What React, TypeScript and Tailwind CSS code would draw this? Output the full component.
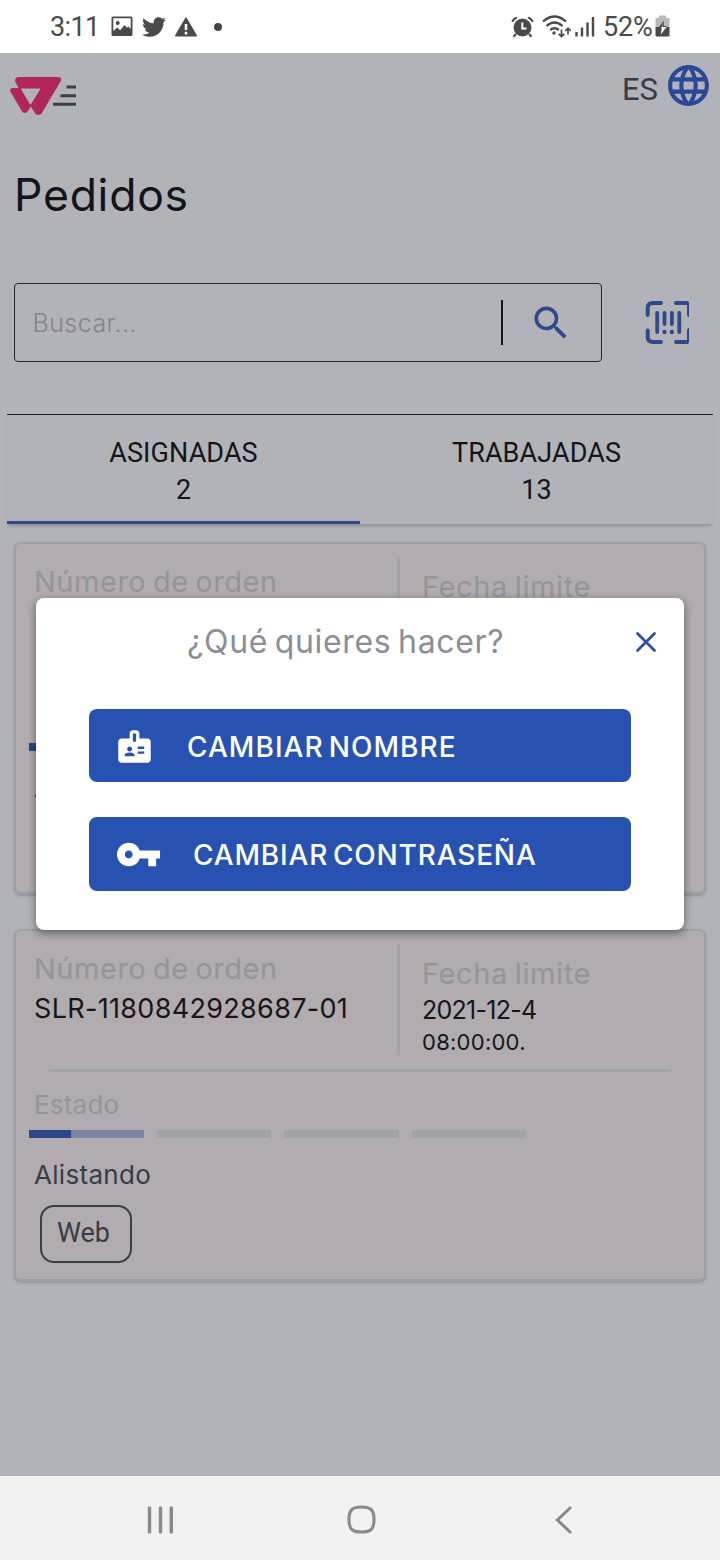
import type { ReactNode } from "react";
import { FaTwitter } from "react-icons/fa";
import { MdBadge, MdLanguage, MdSearch, MdVpnKey } from "react-icons/md";

function StatusBar() {
  return (
    <div className="flex h-[53px] items-center bg-white pl-[50px] text-[#4a4a4a]">
      <span className="w-[61px] pt-px font-[Roboto,sans-serif] text-[27px] leading-8 tracking-[-0.6px]">3:11</span>
      <svg className="h-[21px] w-[22px]" viewBox="0 0 22 21">
        <path
          fill="currentColor"
          fillRule="evenodd"
          d="M2 0.5h18a1.5 1.5 0 0 1 1.5 1.5v16.500a1.500 1.500 0 0 1-1.500 1.500H2a1.500 1.500 0 0 1-1.500-1.500V2A1.500 1.500 0 0 1 2 0.500zM2.300 2.300v12.700l4-3.500 2.800 2.800 4.400-5.300 2.500 2.700 1.300-1.200 2.400 2.200V2.300zM6.700 5a2 2 0 1 1 0 4 2 2 0 0 1 0-4z"
        />
      </svg>
      <FaTwitter className="ml-[9px] size-[24px]" />
      <svg className="ml-[8px] size-[24px]" viewBox="0 0 24 24">
        <path d="M12 3L22.300 20.700H1.700z" fill="currentColor" stroke="currentColor" strokeLinejoin="round" strokeWidth="1.400" />
        <path d="M12 9v6M12 16.800v2.600" stroke="#fff" strokeWidth="2.600" />
      </svg>
      <span className="ml-[16px] size-2 rounded-full bg-[#444444]" />
      <svg className="ml-[289px] h-[22px] w-[23px]" viewBox="0 0 23 22">
        <circle cx="11.500" cy="11.500" r="9" fill="currentColor" />
        <path d="M11.300 6.500v6h4.200" fill="none" stroke="#fff" strokeWidth="2" />
        <path
          d="M1.200 5.800Q2.500 2.800 5.800 1.500M21.800 5.800Q20.500 2.800 17.200 1.500M5 18l-2.500 2.700M18 18l2.500 2.700"
          fill="none"
          stroke="currentColor"
          strokeWidth="2.200"
        />
      </svg>
      <svg className="ml-[8px] h-[23px] w-[29px]" viewBox="0 0 29 23">
        <g fill="none" stroke="currentColor" strokeWidth="2.300">
          <path d="M1 6.500Q12.500-3.500 24 6.500M4.500 11q8-7 16 0M8.200 15q4.300-3.600 8.600 0" />
          <path d="M19.500 14.500v7M16.700 18.800l2.800 2.800 2.800-2.800M26 19.500v-6M23.200 16l2.800-2.800L28.800 16" strokeWidth="1.700" />
        </g>
        <circle cx="12" cy="18" r="1.700" fill="currentColor" />
      </svg>
      <svg className="ml-[4px] h-[21px] w-[20px]" viewBox="0 0 20 21">
        <path d="M1.500 16v4.500M7 11.500v9M12.500 6.500v14M18 1v19.500" stroke="currentColor" strokeWidth="2.400" />
      </svg>
      <span className="ml-[8px] w-[52px] pt-px font-[Roboto,sans-serif] text-[27px] leading-8 tracking-[-0.2px]">52%</span>
      <svg className="mb-px h-[22px] w-[15px]" viewBox="0 0 15 22">
        <path d="M4 0.500h7v2.500h3.500V12H0.500V3H4z" fill="#b9b9b9" />
        <path d="M0.500 12h14v8.500q0 1-1 1h-12q-1 0-1-1z" fill="#4a4a4a" />
        <path d="M9.200 5.500L3.500 12.500h3z" fill="#4a4a4a" />
        <path d="M8.800 5.500v5.500h3l-.5 1H7.500z" fill="#4a4a4a" />
        <path d="M6.300 12h5.200l-5.700 7.500.8-5.500z" fill="#fff" />
      </svg>
    </div>
  );
}

function Logo() {
  return (
    <svg className="mt-[23px] h-[40px] w-[68px]" viewBox="9 76 68 40">
      <path
        fill="#b0265c"
        fillRule="evenodd"
        d="M18 77H58.500Q62.300 77.500 60.800 81L41.500 113.500Q38.500 116.500 35.300 113.500L30.700 106.500 27.500 111.800Q25 114 22.400 112L10.300 91.500Q9.300 88.500 12.200 88H18.500L15.200 81.500Q14.500 78 18 77ZM21.800 88.600Q20.800 88.800 21.300 89.800L29.900 104Q30.500 105 31.100 104L39.900 89.800Q40.300 88.700 39.300 88.600Z"
      />
      <path d="M66.500 87H76M60.500 95.700H76M53 104.300H76" stroke="#393e48" strokeWidth="2.900" />
    </svg>
  );
}

function ScanIcon() {
  return (
    <svg className="ml-[43px] h-[45px] w-[45px]" viewBox="0 0 45 45">
      <g fill="none" stroke="#2f4a8c" strokeLinecap="round" strokeWidth="4">
        <path d="M2.700 15V8Q2.700 3 8 3h8M31 3h10.500M2.700 30.500v6.500q0 5 5.300 5h8M31 42h10.500" />
        <path d="M12.200 13v19M19.500 13v11M26.900 13v11M34.300 13v19" strokeWidth="3.800" />
        <path d="M19.500 32v.1M26.900 32v.1" strokeWidth="4.400" />
      </g>
      <path d="M40 1h2.300q1.700.3 1.700 2.500V17h-1Q42 16 42 14.500V5H40zM40 44h2.300q1.700-.3 1.700-2.500V28h-1q-1 1-1 2.500V40H40z" fill="#2f4a8c" />
    </svg>
  );
}

function Tab({ label, count, active }: { label: string; count: number; active?: boolean }) {
  return (
    <div
      className={
        active
          ? "flex w-[353px] flex-col items-center border-b-[3px] border-[#30498a] pt-[20px]"
          : "flex w-[353px] flex-col items-center pt-[20px]"
      }
    >
      <span className="h-[37px] font-[Roboto,sans-serif] text-[27px] leading-[37px] tracking-[0.1px]">{label}</span>
      <span className="h-[37px] font-[Roboto,sans-serif] text-[27px] leading-[37px]">{count}</span>
    </div>
  );
}

type Order = { number?: string; date?: string; time?: string; channel?: string };

function OrderCard({ number, date, time, channel }: Order) {
  return (
    <section className="h-[352px] rounded-[7px] border-2 border-[#9fa0a7] bg-[#b2abb0] shadow-[0_2px_3px_rgba(70,75,90,0.3)]">
      <div className="mt-[13px] flex h-[111px]">
        <div className="flex w-[381px] flex-col pt-[8px] pl-[18px]">
          <span className="text-[29px] leading-[33px] tracking-[0.520px] text-[#94959b] [word-spacing:-2px]">Número de orden</span>
          <span className="mt-[7px] text-[27px] leading-[33px] tracking-[0.320px] text-[#17151a]">{number}</span>
        </div>
        <div className="w-[3px] bg-[#a1a3aa]" />
        <div className="flex flex-col pt-[13px] pl-[22px]">
          <span className="text-[29px] leading-[33px] tracking-[0.620px] text-[#94959b] [word-spacing:-2px]">Fecha limite</span>
          <span className="mt-[8px] text-[25px] leading-[25px] tracking-[-0.730px] text-[#17151a]">{date}</span>
          <span className="mt-[7px] text-[22px] leading-[24px] tracking-[0.260px] text-[#17151a]">{time}</span>
        </div>
      </div>
      <div className="mx-[33px] mt-[14px] h-[3px] bg-[#a1a3aa]" />
      <div className="mt-[17px] ml-[18px] text-[26px] leading-[31px] tracking-[0.200px] text-[#94959b]">Estado</div>
      <div className="mt-[10px] ml-[13px] flex h-[8px] w-[497px] gap-[13px]">
        <div className="flex flex-1 bg-[#7d85a5]">
          <div className="w-[42px] bg-[#2d4788]" />
        </div>
        <div className="flex-1 bg-[#a0a4a8]" />
        <div className="flex-1 bg-[#a0a4a8]" />
        <div className="flex-1 bg-[#a0a4a8]" />
      </div>
      <div className="mt-[21px] ml-[18px] text-[26px] leading-[31px] tracking-[0.300px] text-[#393b47]">Alistando</div>
      {channel && (
        <div className="mt-[15px] ml-[24px] flex h-[58px] w-[92px] items-center justify-center rounded-[14px] border-2 border-[#3c3f4a] pr-[5px] pb-[3px] font-[Roboto,sans-serif] text-[27px] leading-8 text-[#393b47]">
          {channel}
        </div>
      )}
    </section>
  );
}

function DialogButton({ icon, children }: { icon: ReactNode; children: ReactNode }) {
  return (
    <button className="flex h-full w-[542px] items-center rounded-[8px] bg-[#2852b2] pl-[26px] text-[28px] leading-8 font-medium text-white">
      {icon}
      {children}
    </button>
  );
}

function Dialog() {
  return (
    <div className="absolute top-[598px] left-[36px] flex h-[332px] w-[648px] flex-col items-center rounded-[8px] bg-white shadow-[0_3px_10px_rgba(0,0,0,0.45)]">
      <div className="flex h-[87px] w-full items-center pl-[151px]">
        <h2 className="w-[448.500px] text-[32px] leading-9 tracking-[0.670px] text-[#8b8d98] [word-spacing:-3px]">¿Qué quieres hacer?</h2>
        <svg className="h-[20px] w-[20px]" viewBox="0 0 20 20">
          <path d="M1.500 1.500l17 17M18.500 1.500l-17 17" stroke="#2a4fa6" strokeLinecap="round" strokeWidth="2.700" />
        </svg>
      </div>
      <div className="mt-[24px] grid grid-rows-[73px_74px] gap-[35px]">
        <DialogButton icon={<MdBadge className="mt-px mr-[33px] size-[39px]" />}>
          <span className="pt-[3px] tracking-[1.050px] [word-spacing:-3.500px]">CAMBIAR NOMBRE</span>
        </DialogButton>
        <DialogButton icon={<MdVpnKey className="mr-[31px] size-[47px]" />}>
          <span className="pt-[2px] tracking-[0.830px] [word-spacing:-3.500px]">CAMBIAR CONTRASEÑA</span>
        </DialogButton>
      </div>
    </div>
  );
}

function NavigationBar() {
  return (
    <div className="flex h-[84px] items-center bg-[#f1f1f1] pt-[3px] pl-[147px] text-[#8a8a8a]">
      <svg className="h-[28px] w-[27px]" viewBox="0 0 27 28">
        <path d="M2.500 2v24M13.500 2v24M24.300 2v24" stroke="currentColor" strokeLinecap="round" strokeWidth="3.500" />
      </svg>
      <svg className="ml-[173px] size-[29px]" viewBox="0 0 29 29">
        <path
          d="M14.500 2C23.500 2 27 4.500 27 14.500S23.500 27 14.500 27 2 24.500 2 14.500 5.500 2 14.500 2z"
          fill="none"
          stroke="currentColor"
          strokeWidth="3.100"
        />
      </svg>
      <svg className="ml-[179px] h-[28px] w-[17px]" viewBox="0 0 17 28">
        <path d="M15 2L2.500 14 15 26" fill="none" stroke="currentColor" strokeLinecap="round" strokeWidth="3.100" />
      </svg>
    </div>
  );
}

export default function App() {
  return (
    <div className="relative flex h-[1560px] w-[720px] flex-col overflow-hidden bg-[#b2b3b8] font-[Inter,sans-serif]">
      <StatusBar />
      <main className="flex-1">
        <header className="flex h-[109px] items-start justify-between pr-[7px] pl-[9px]">
          <Logo />
          <div className="flex items-center pt-[8px] text-[#393b47]">
            <span className="mt-[9px] mr-[6px] font-[Roboto,sans-serif] text-[31px] leading-8">ES</span>
            <MdLanguage className="size-[49px] text-[#2a4798]" />
          </div>
        </header>
        <h1 className="h-[65px] pt-px pl-[14px] text-[44.500px] leading-[65px] tracking-[0.750px] text-[#12141a]">Pedidos</h1>
        <div className="mt-[56px] flex items-center pl-[14px]">
          <div className="flex h-[79px] w-[588px] items-center rounded-[4px] border border-[#26272d] pl-[17.500px]">
            <span className="w-[468.500px] pt-px text-[25px] leading-8 font-light tracking-[0.450px] text-[#83848a]">Buscar...</span>
            <div className="h-[45px] w-[2px] bg-[#15161a]" />
            <MdSearch className="ml-[26px] size-[44px] text-[#2f4a8c]" />
          </div>
          <ScanIcon />
        </div>
        <div className="mx-[7px] mt-[52px] flex h-[110px] border-t border-[#1b1b20] text-[#14151b] shadow-[0_4px_3px_-2px_rgba(80,80,90,0.35)]">
          <Tab label="ASIGNADAS" count={2} active />
          <Tab label="TRABAJADAS" count={13} />
        </div>
        <div className="mt-[18px] flex flex-col gap-[35px] px-[14px]">
          <OrderCard />
          <OrderCard number="SLR-1180842928687-01" date="2021-12-4" time="08:00:00." channel="Web" />
        </div>
      </main>
      <NavigationBar />
      <Dialog />
    </div>
  );
}
